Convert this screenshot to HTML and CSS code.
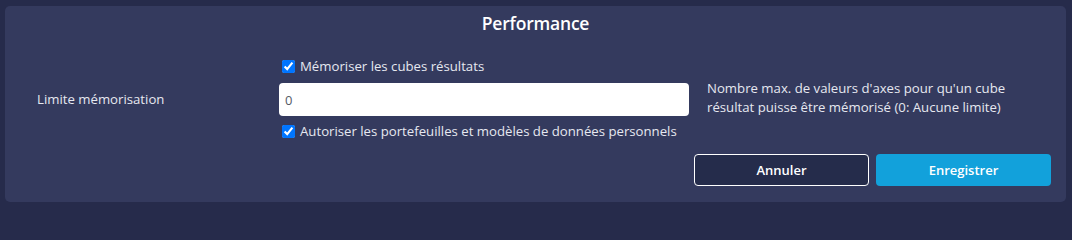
FILE: index.html
```html
<!DOCTYPE html>
<html lang="fr">
<head>
<meta charset="utf-8">
<title>Performance</title>
<link rel="stylesheet" href="styles.css">
</head>
<body>
<div class="panel">
  <h2 class="title">Performance</h2>
  <div class="form-row">
    <div class="label">Limite mémorisation</div>
    <div class="field">
      <label class="check"><input type="checkbox" checked><span>Mémoriser les cubes résultats</span></label>
      <input class="text-input" type="text" value="0">
      <label class="check"><input type="checkbox" checked><span>Autoriser les portefeuilles et modèles de données personnels</span></label>
    </div>
    <div class="help">Nombre max. de valeurs d'axes pour qu'un cube résultat puisse être mémorisé (0: Aucune limite)</div>
  </div>
  <div class="actions">
    <button class="btn btn-cancel">Annuler</button>
    <button class="btn btn-save">Enregistrer</button>
  </div>
</div>
</body>
</html>
```
FILE: styles.css
```css
html, body {
  margin: 0;
  padding: 0;
}
body {
  background: #262b4b;
  font-family: "Open Sans", "Noto Sans", sans-serif;
  font-size: 13.2px;
  color: #e6e8f0;
  padding: 6px 6px 7px 5px;
}
.panel {
  background: #343a5e;
  border-radius: 5px;
  height: 196px;
  box-sizing: border-box;
  padding: 0 15px 0 32px;
  display: flex;
  flex-direction: column;
}
.title {
  margin: 0;
  padding-top: 5px;
  height: 30px;
  line-height: 24px;
  font-size: 17.5px;
  font-weight: 600;
  letter-spacing: -0.2px;
  color: #ffffff;
  text-align: center;
  margin-left: -32px;
  margin-right: -15px;
}
.form-row {
  display: grid;
  grid-template-columns: 224px 410px 1fr;
  column-gap: 18px;
  align-items: center;
  margin-top: 15px;
}
.label {
  padding-top: 0;
}
.field {
  display: flex;
  flex-direction: column;
}
.check {
  display: flex;
  align-items: center;
  height: 20px;
  line-height: 20px;
}
.check input {
  width: 13px;
  height: 13px;
  margin: 0 5px 0 3px;
}
.text-input {
  margin: 7px 0 5px;
  height: 33px;
  box-sizing: border-box;
  border: none;
  border-radius: 4px;
  background: #ffffff;
  padding: 0 6px;
  font-family: inherit;
  font-size: 13px;
  color: #555a66;
  outline: none;
}
.help {
  line-height: 19px;
  width: 315px;
  padding-bottom: 2px;
}
.actions {
  display: flex;
  justify-content: flex-end;
  gap: 7px;
  margin-top: 13px;
}
.btn {
  width: 175px;
  height: 32px;
  box-sizing: border-box;
  border-radius: 4px;
  font-family: inherit;
  font-size: 13px;
  font-weight: 600;
  color: #ffffff;
  cursor: pointer;
}
.btn-cancel {
  background: #252c4b;
  border: 1px solid #ffffff;
}
.btn-save {
  background: #12a1db;
  border: none;
}
```
